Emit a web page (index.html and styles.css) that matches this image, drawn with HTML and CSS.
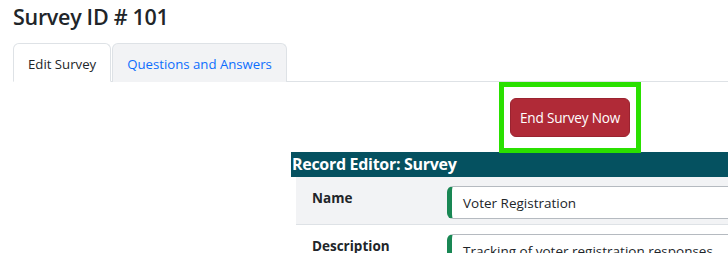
FILE: index.html
```html
<!DOCTYPE html>
<html>
<head>
<meta charset="utf-8">
<link rel="stylesheet" href="styles.css">
</head>
<body>
<div class="page">
  <h1 class="title">Survey ID # 101</h1>
  <ul class="tabs">
    <li class="tab active">Edit Survey</li>
    <li class="tab">Questions and Answers</li>
  </ul>
  <div class="editor">
    <div class="action">
      <div class="highlight">
        <button class="btn-danger">End Survey Now</button>
      </div>
    </div>
    <div class="editor-head">Record Editor: Survey</div>
    <div class="rows">
      <div class="row">
        <div class="label">Name</div>
        <div class="field">Voter Registration</div>
      </div>
      <div class="row">
        <div class="label">Description</div>
        <div class="field">Tracking of voter registration responses</div>
      </div>
    </div>
  </div>
</div>
</body>
</html>
```

FILE: styles.css
```css
html, body {
  margin: 0;
  padding: 0;
  overflow: hidden;
  background: #fff;
}
body {
  font-family: "Open Sans", "Noto Sans", sans-serif;
  color: #212529;
}
.page {
  padding: 0 0 0 13px;
}
.title {
  margin: 0;
  padding-top: 2px;
  font-size: 21.5px;
  font-weight: 600;
  line-height: 30px;
  height: 41px;
  letter-spacing: -0.3px;
}
.tabs {
  list-style: none;
  margin: 0;
  padding: 0;
  display: flex;
  border-bottom: 1px solid #dee2e6;
  height: 38px;
}
.tab {
  box-sizing: border-box;
  height: 39px;
  padding: 0 14px;
  line-height: 40px;
  font-size: 13.2px;
  color: #0d6efd;
  background: #f2f3f5;
  border: 1px solid #dee2e6;
  border-bottom: none;
  border-radius: 6px 6px 0 0;
  margin-right: 1px;
}
.tab.active {
  background: #fff;
  color: #212529;
  border-bottom: 1px solid #fff;
}
.editor {
  margin-left: 278px;
  width: 558px;
}
.action {
  display: flex;
  justify-content: center;
}
.highlight {
  border: 5px solid #2ae000;
  padding: 11px 6px 11px 6px;
}
.btn-danger {
  display: block;
  width: 120px;
  height: 39px;
  background: #b02a37;
  color: #fff;
  border: 1px solid #9a2330;
  border-radius: 6px;
  font-family: inherit;
  font-size: 13.6px;
  letter-spacing: -0.2px;
  padding: 0;
}
.editor-head {
  margin-top: -1px;
  background: #055160;
  color: #fff;
  font-weight: 700;
  font-size: 16px;
  height: 25px;
  line-height: 25px;
  padding-left: 1px;
  letter-spacing: -0.3px;
}
.rows {
  margin-left: 5px;
}
.row {
  display: flex;
  border-bottom: 1px solid #dee2e6;
  padding: 9px 0 5px 0;
}
.row:first-child {
  background: #f2f3f5;
}
.label {
  width: 151px;
  box-sizing: border-box;
  padding-left: 16px;
  padding-top: 3px;
  font-weight: 700;
  font-size: 13.5px;
}
.field {
  flex: 1;
  height: 33px;
  box-sizing: border-box;
  border: 1px solid #b5bac0;
  border-left: 5px solid #198754;
  border-radius: 6px;
  padding-left: 11px;
  line-height: 33px;
  font-size: 13.5px;
  background: #fff;
}
```
